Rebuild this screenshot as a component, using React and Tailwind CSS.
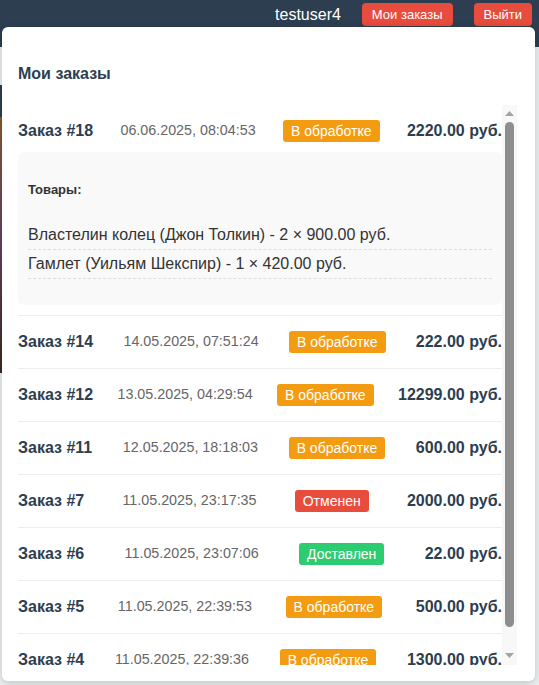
const orders = [
  {
    id: 18,
    date: '06.06.2025, 08:04:53',
    status: 'processing',
    total: '2220.00',
    items: [
      'Властелин колец (Джон Толкин) - 2 × 900.00 руб.',
      'Гамлет (Уильям Шекспир) - 1 × 420.00 руб.',
    ],
  },
  { id: 14, date: '14.05.2025, 07:51:24', status: 'processing', total: '222.00' },
  { id: 12, date: '13.05.2025, 04:29:54', status: 'processing', total: '12299.00' },
  { id: 11, date: '12.05.2025, 18:18:03', status: 'processing', total: '600.00' },
  { id: 7, date: '11.05.2025, 23:17:35', status: 'cancelled', total: '2000.00' },
  { id: 6, date: '11.05.2025, 23:07:06', status: 'delivered', total: '22.00' },
  { id: 5, date: '11.05.2025, 22:39:53', status: 'processing', total: '500.00' },
  { id: 4, date: '11.05.2025, 22:39:36', status: 'processing', total: '1300.00' },
]

const statusInfo = {
  processing: { label: 'В обработке', cls: 'bg-[#f39c12]' },
  cancelled: { label: 'Отменен', cls: 'bg-[#e74c3c]' },
  delivered: { label: 'Доставлен', cls: 'bg-[#2ecc71]' },
}

function StatusBadge({ status }) {
  const s = statusInfo[status]
  return (
    <span className={`${s.cls} text-white text-[14px] leading-[22px] px-[8px] rounded-[3px]`}>
      {s.label}
    </span>
  )
}

function OrderRow({ order }) {
  const expanded = !!order.items
  return (
    <div className={`border-b border-[#eee] pt-[15px] ${expanded ? 'pb-[10px]' : 'pb-[15px]'}`}>
      <div className="flex items-center justify-between h-[22px]">
        <span className="text-[16px] font-bold text-[#2c3e50]">Заказ #{order.id}</span>
        <span className="text-[14.3px] text-[#666]">{order.date}</span>
        <StatusBadge status={order.status} />
        <span className="text-[16px] font-bold text-[#2c3e50]">{order.total} руб.</span>
      </div>
      {expanded && (
        <div className="mt-[10px] bg-[#f9f9f9] rounded-[6px] px-[10px] pt-[30px] pb-[26px]">
          <div className="text-[13px] leading-[16px] font-bold text-[#333]">Товары:</div>
          <ul className="mt-[23px]">
            {order.items.map(it => (
              <li key={it} className="text-[16px] leading-[18px] py-[5px] text-[#333] border-b border-dashed border-[#ddd]">
                {it}
              </li>
            ))}
          </ul>
        </div>
      )}
    </div>
  )
}

// classic scrollbar, drawn since the headless browser hides its own
function Scrollbar() {
  return (
    <div className="w-[15px] h-[560px] bg-[#f8f8f8] flex flex-col items-center pt-[6px]">
      <svg width="9" height="5" viewBox="0 0 9 5"><path d="M4.5 0L9 5H0z" fill="#a3a3a3" /></svg>
      <div className="mt-[6px] w-[9px] h-[505px] rounded-full bg-[#8e8e8e]" />
      <svg className="mt-[26px]" width="9" height="5" viewBox="0 0 9 5"><path d="M0 0H9L4.5 5z" fill="#a3a3a3" /></svg>
    </div>
  )
}

export default function App() {
  return (
    <div className="relative min-h-[685px] bg-[#ecf0f1] font-['Liberation_Sans',Arial,sans-serif] overflow-hidden">
      <header className="h-[47px] bg-[#2c3e50] flex justify-end items-start pt-[3px] pr-[7px] gap-[21px]">
        <span className="text-white text-[16px] leading-[23px]">testuser4</span>
        <button className="bg-[#e74c3c] text-white text-[13px] leading-[17px] py-[3px] px-[10px] rounded-[4px]">Мои заказы</button>
        <button className="bg-[#e74c3c] text-white text-[13px] leading-[17px] py-[3px] px-[10px] rounded-[4px]">Выйти</button>
      </header>
      <main className="pt-[38px]">
        <div className="h-[32px] w-[200px] bg-[#2c3e50]" />
        <div className="h-[256px] w-[200px] bg-gradient-to-b from-[#8a5a2b] via-[#6b3f5e] to-[#3b2a20]" />
      </main>

      <div className="absolute top-[27px] left-[2px] w-[533px] h-[654px] bg-white rounded-[6px] shadow-[0_2px_8px_rgba(0,0,0,0.2)] pl-[16px] pr-[18px] pt-[38px] pb-[16px] flex flex-col">
        <h2 className="text-[16px] leading-[18px] font-bold text-[#2c3e50]">Мои заказы</h2>
        <div className="mt-[22px] flex">
          <div className="w-[484px] h-[560px] overflow-hidden">
            {orders.map(o => <OrderRow key={o.id} order={o} />)}
          </div>
          <Scrollbar />
        </div>
      </div>
    </div>
  )
}
